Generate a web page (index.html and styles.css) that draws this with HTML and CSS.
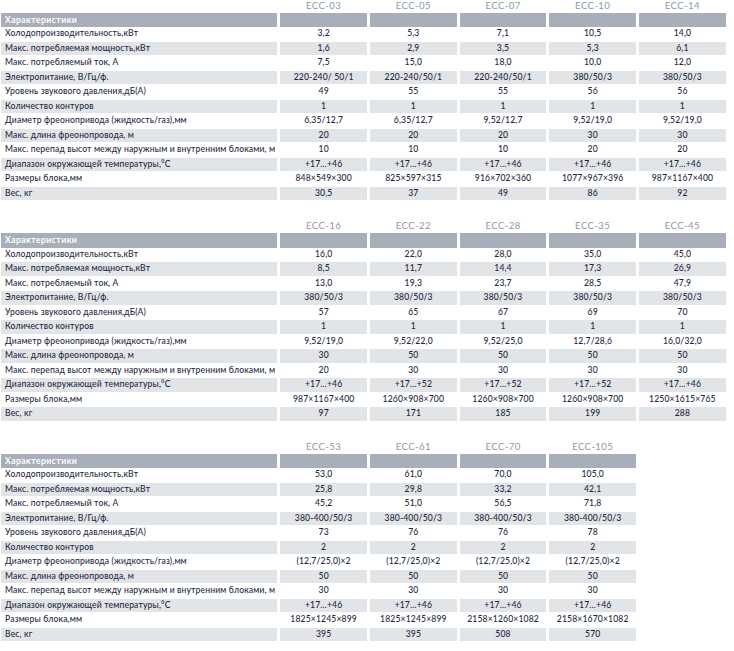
FILE: index.html
```html
<!DOCTYPE html>
<html lang="ru">
<head>
<meta charset="utf-8">
<title>Характеристики ECC</title>
<link rel="stylesheet" href="styles.css">
</head>
<body>
<section class="spec">
  <div class="blank"></div>
  <div class="model">ECC-03</div><div class="model">ECC-05</div><div class="model">ECC-07</div><div class="model">ECC-10</div><div class="model">ECC-14</div>
  <div class="head label">Характеристики</div><div class="head"></div><div class="head"></div><div class="head"></div><div class="head"></div><div class="head"></div>
  <div class="label">Холодопроизводительность,кВт</div><div class="val">3,2</div><div class="val">5,3</div><div class="val">7,1</div><div class="val">10,5</div><div class="val">14,0</div>
  <div class="label alt">Макс. потребляемая мощность,кВт</div><div class="val alt">1,6</div><div class="val alt">2,9</div><div class="val alt">3,5</div><div class="val alt">5,3</div><div class="val alt">6,1</div>
  <div class="label">Макс. потребляемый ток, А</div><div class="val">7,5</div><div class="val">15,0</div><div class="val">18,0</div><div class="val">10,0</div><div class="val">12,0</div>
  <div class="label alt">Электропитание, В/Гц/ф.</div><div class="val alt">220-240/ 50/1</div><div class="val alt">220-240/50/1</div><div class="val alt">220-240/50/1</div><div class="val alt">380/50/3</div><div class="val alt">380/50/3</div>
  <div class="label">Уровень звукового давления,дБ(А)</div><div class="val">49</div><div class="val">55</div><div class="val">55</div><div class="val">56</div><div class="val">56</div>
  <div class="label alt">Количество контуров</div><div class="val alt">1</div><div class="val alt">1</div><div class="val alt">1</div><div class="val alt">1</div><div class="val alt">1</div>
  <div class="label">Диаметр фреонопривода (жидкость/газ),мм</div><div class="val">6,35/12,7</div><div class="val">6,35/12,7</div><div class="val">9,52/12,7</div><div class="val">9,52/19,0</div><div class="val">9,52/19,0</div>
  <div class="label alt">Макс. длина фреонопровода, м</div><div class="val alt">20</div><div class="val alt">20</div><div class="val alt">20</div><div class="val alt">30</div><div class="val alt">30</div>
  <div class="label">Макс. перепад высот между наружным и внутренним блоками, м</div><div class="val">10</div><div class="val">10</div><div class="val">10</div><div class="val">20</div><div class="val">20</div>
  <div class="label alt">Диапазон окружающей температуры,°С</div><div class="val alt">+17…+46</div><div class="val alt">+17…+46</div><div class="val alt">+17…+46</div><div class="val alt">+17…+46</div><div class="val alt">+17…+46</div>
  <div class="label">Размеры блока,мм</div><div class="val">848×549×300</div><div class="val">825×597×315</div><div class="val">916×702×360</div><div class="val">1077×967×396</div><div class="val">987×1167×400</div>
  <div class="label alt">Вес, кг</div><div class="val alt">30,5</div><div class="val alt">37</div><div class="val alt">49</div><div class="val alt">86</div><div class="val alt">92</div>
</section>

<section class="spec">
  <div class="blank"></div>
  <div class="model">ECC-16</div><div class="model">ECC-22</div><div class="model">ECC-28</div><div class="model">ECC-35</div><div class="model">ECC-45</div>
  <div class="head label">Характеристики</div><div class="head"></div><div class="head"></div><div class="head"></div><div class="head"></div><div class="head"></div>
  <div class="label">Холодопроизводительность,кВт</div><div class="val">16,0</div><div class="val">22,0</div><div class="val">28,0</div><div class="val">35,0</div><div class="val">45,0</div>
  <div class="label alt">Макс. потребляемая мощность,кВт</div><div class="val alt">8,5</div><div class="val alt">11,7</div><div class="val alt">14,4</div><div class="val alt">17,3</div><div class="val alt">26,9</div>
  <div class="label">Макс. потребляемый ток, А</div><div class="val">13,0</div><div class="val">19,3</div><div class="val">23,7</div><div class="val">28,5</div><div class="val">47,9</div>
  <div class="label alt">Электропитание, В/Гц/ф.</div><div class="val alt">380/50/3</div><div class="val alt">380/50/3</div><div class="val alt">380/50/3</div><div class="val alt">380/50/3</div><div class="val alt">380/50/3</div>
  <div class="label">Уровень звукового давления,дБ(А)</div><div class="val">57</div><div class="val">65</div><div class="val">67</div><div class="val">69</div><div class="val">70</div>
  <div class="label alt">Количество контуров</div><div class="val alt">1</div><div class="val alt">1</div><div class="val alt">1</div><div class="val alt">1</div><div class="val alt">1</div>
  <div class="label">Диаметр фреонопривода (жидкость/газ),мм</div><div class="val">9,52/19,0</div><div class="val">9,52/22,0</div><div class="val">9,52/25,0</div><div class="val">12,7/28,6</div><div class="val">16,0/32,0</div>
  <div class="label alt">Макс. длина фреонопровода, м</div><div class="val alt">30</div><div class="val alt">50</div><div class="val alt">50</div><div class="val alt">50</div><div class="val alt">50</div>
  <div class="label">Макс. перепад высот между наружным и внутренним блоками, м</div><div class="val">20</div><div class="val">30</div><div class="val">30</div><div class="val">30</div><div class="val">30</div>
  <div class="label alt">Диапазон окружающей температуры,°С</div><div class="val alt">+17…+46</div><div class="val alt">+17…+52</div><div class="val alt">+17…+52</div><div class="val alt">+17…+52</div><div class="val alt">+17…+46</div>
  <div class="label">Размеры блока,мм</div><div class="val">987×1167×400</div><div class="val">1260×908×700</div><div class="val">1260×908×700</div><div class="val">1260×908×700</div><div class="val">1250×1615×765</div>
  <div class="label alt">Вес, кг</div><div class="val alt">97</div><div class="val alt">171</div><div class="val alt">185</div><div class="val alt">199</div><div class="val alt">288</div>
</section>

<section class="spec four">
  <div class="blank"></div>
  <div class="model">ECC-53</div><div class="model">ECC-61</div><div class="model">ECC-70</div><div class="model">ECC-105</div>
  <div class="head label">Характеристики</div><div class="head"></div><div class="head"></div><div class="head"></div><div class="head"></div>
  <div class="label">Холодопроизводительность,кВт</div><div class="val">53,0</div><div class="val">61,0</div><div class="val">70,0</div><div class="val">105,0</div>
  <div class="label alt">Макс. потребляемая мощность,кВт</div><div class="val alt">25,8</div><div class="val alt">29,8</div><div class="val alt">33,2</div><div class="val alt">42,1</div>
  <div class="label">Макс. потребляемый ток, А</div><div class="val">45,2</div><div class="val">51,0</div><div class="val">56,5</div><div class="val">71,8</div>
  <div class="label alt">Электропитание, В/Гц/ф.</div><div class="val alt">380-400/50/3</div><div class="val alt">380-400/50/3</div><div class="val alt">380-400/50/3</div><div class="val alt">380-400/50/3</div>
  <div class="label">Уровень звукового давления,дБ(А)</div><div class="val">73</div><div class="val">76</div><div class="val">76</div><div class="val">78</div>
  <div class="label alt">Количество контуров</div><div class="val alt">2</div><div class="val alt">2</div><div class="val alt">2</div><div class="val alt">2</div>
  <div class="label">Диаметр фреонопривода (жидкость/газ),мм</div><div class="val">(12,7/25,0)×2</div><div class="val">(12,7/25,0)×2</div><div class="val">(12,7/25,0)×2</div><div class="val">(12,7/25,0)×2</div>
  <div class="label alt">Макс. длина фреонопровода, м</div><div class="val alt">50</div><div class="val alt">50</div><div class="val alt">50</div><div class="val alt">50</div>
  <div class="label">Макс. перепад высот между наружным и внутренним блоками, м</div><div class="val">30</div><div class="val">30</div><div class="val">30</div><div class="val">30</div>
  <div class="label alt">Диапазон окружающей температуры,°С</div><div class="val alt">+17…+46</div><div class="val alt">+17…+46</div><div class="val alt">+17…+46</div><div class="val alt">+17…+46</div>
  <div class="label">Размеры блока,мм</div><div class="val">1825×1245×899</div><div class="val">1825×1245×899</div><div class="val">2158×1260×1082</div><div class="val">2158×1670×1082</div>
  <div class="label alt">Вес, кг</div><div class="val alt">395</div><div class="val alt">395</div><div class="val alt">508</div><div class="val alt">570</div>
</section>
</body>
</html>
```

FILE: styles.css
```css
html, body {
  margin: 0;
  padding: 0;
  background: #ffffff;
}

body {
  padding: 0 0 0 1px;
  font-family: "Lato", "Noto Sans", sans-serif;
  font-size: 8.6px;
  font-weight: 500;
  letter-spacing: 0.14px;
  color: #1f2842;
}

.spec {
  display: grid;
  grid-template-columns: 276.3px repeat(5, 86.7px);
  grid-template-rows: 12px;
  grid-auto-rows: 13.7px;
  column-gap: 3px;
  row-gap: 0.8px;
  margin-bottom: 20.2px;
}

.spec.four {
  grid-template-columns: 276.3px repeat(4, 86.7px);
}

.model {
  text-align: center;
  color: #8e97a9;
  font-size: 9.6px;
  font-weight: 400;
  line-height: 12px;
  letter-spacing: 0.4px;
}

.head {
  background: #a8afba;
  color: #ffffff;
  font-weight: 700;
  height: 14.6px;
}

.head.label {
  line-height: 14.6px;
  letter-spacing: 0.45px;
}

.label {
  padding-left: 4px;
  line-height: 13.7px;
  white-space: nowrap;
  overflow: hidden;
}

.val {
  text-align: center;
  line-height: 13.7px;
  white-space: nowrap;
}

.alt {
  background: #e2e5e8;
}
```
